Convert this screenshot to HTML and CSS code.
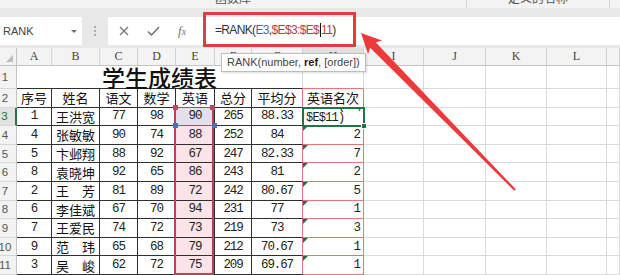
FILE: index.html
```html
<!DOCTYPE html>
<html lang="zh-CN">
<head>
  <meta charset="UTF-8" />
  <title>RANK 函数</title>
  <link rel="stylesheet" href="styles.css">
</head>
<body>
  <div class="ribbon">
    <div class="ribbon-group"><span>函数库</span></div>
    <div class="ribbon-group names"><span>定义的名称</span></div>
  </div>
  <div class="band"></div>

  <div class="formula-bar">
    <div class="name-box"><span>RANK</span><i class="dropdown"></i></div>
    <div class="grip"><i></i></div>
    <div class="fx-buttons">
      <svg width="10" height="10" viewBox="0 0 10 10"><path d="M1 1L9 9M9 1L1 9" stroke="#777" stroke-width="1.4" fill="none"/></svg>
      <svg width="13" height="10" viewBox="0 0 13 10"><path d="M1 5.5L4.5 9L12 1" stroke="#777" stroke-width="1.6" fill="none"/></svg>
      <span class="fx">f<small>x</small></span>
    </div>
    <div class="formula-input">
      <span>=RANK(<span class="ref-blue">E3</span>,<span class="ref-red">$E$3:$E$<i class="caret"></i>11</span>)</span>
    </div>
  </div>

  <div class="sheet">
    <!-- column headers -->
    <div class="cell corner"><i></i></div>
    <div class="cell col-head">A</div>
    <div class="cell col-head">B</div>
    <div class="cell col-head">C</div>
    <div class="cell col-head">D</div>
    <div class="cell col-head">E</div>
    <div class="cell col-head">F</div>
    <div class="cell col-head">G</div>
    <div class="cell col-head sel">H</div>
    <div class="cell col-head">I</div>
    <div class="cell col-head">J</div>
    <div class="cell col-head">K</div>
    <div class="cell col-head">L</div>
    <div class="cell col-head"></div>

    <!-- row 1 -->
    <div class="cell row-head">1</div>
    <div class="cell title">学生成绩表</div>
    <div class="cell rank-top"></div>
    <div class="cell"></div><div class="cell"></div><div class="cell"></div><div class="cell"></div><div class="cell"></div>

    <!-- row 2 -->
    <div class="cell row-head">2</div>
    <div class="cell tbl zh">序号</div>
    <div class="cell tbl zh">姓名</div>
    <div class="cell tbl zh">语文</div>
    <div class="cell tbl zh">数学</div>
    <div class="cell tbl zh">英语</div>
    <div class="cell tbl zh">总分</div>
    <div class="cell tbl zh avg">平均分</div>
    <div class="cell rank zh">英语名次</div>
    <div class="cell"></div><div class="cell"></div><div class="cell"></div><div class="cell"></div><div class="cell"></div>

    <!-- row 3 -->
    <div class="cell row-head sel">3</div>
    <div class="cell tbl num">1</div>
    <div class="cell tbl zh">王洪宽</div>
    <div class="cell tbl num">77</div>
    <div class="cell tbl num">98</div>
    <div class="cell tbl num eng first">90<span class="ref-range"></span><span class="ref-cell"></span></div>
    <div class="cell tbl num">265</div>
    <div class="cell tbl num avg">88.33</div>
    <div class="cell rank active">
      <div class="edit"><span>=RANK(E3,$E$3:</span><span>$E$11)</span></div>
    </div>
    <div class="cell"></div><div class="cell"></div><div class="cell"></div><div class="cell"></div><div class="cell"></div>

    <!-- row 4 -->
    <div class="cell row-head">4</div>
    <div class="cell tbl num">4</div>
    <div class="cell tbl zh">张敏敏</div>
    <div class="cell tbl num">90</div>
    <div class="cell tbl num">74</div>
    <div class="cell tbl num eng">88</div>
    <div class="cell tbl num">252</div>
    <div class="cell tbl num avg">84</div>
    <div class="cell rank num flag">2</div>
    <div class="cell"></div><div class="cell"></div><div class="cell"></div><div class="cell"></div><div class="cell"></div>

    <!-- row 5 -->
    <div class="cell row-head">5</div>
    <div class="cell tbl num">5</div>
    <div class="cell tbl zh">卞邺翔</div>
    <div class="cell tbl num">88</div>
    <div class="cell tbl num">92</div>
    <div class="cell tbl num eng">67</div>
    <div class="cell tbl num">247</div>
    <div class="cell tbl num avg">82.33</div>
    <div class="cell rank num flag">7</div>
    <div class="cell"></div><div class="cell"></div><div class="cell"></div><div class="cell"></div><div class="cell"></div>

    <!-- row 6 -->
    <div class="cell row-head">6</div>
    <div class="cell tbl num">8</div>
    <div class="cell tbl zh">袁晓坤</div>
    <div class="cell tbl num">92</div>
    <div class="cell tbl num">65</div>
    <div class="cell tbl num eng">86</div>
    <div class="cell tbl num">243</div>
    <div class="cell tbl num avg">81</div>
    <div class="cell rank num flag">2</div>
    <div class="cell"></div><div class="cell"></div><div class="cell"></div><div class="cell"></div><div class="cell"></div>

    <!-- row 7 -->
    <div class="cell row-head">7</div>
    <div class="cell tbl num">2</div>
    <div class="cell tbl zh"><span class="spread">王 芳</span></div>
    <div class="cell tbl num">81</div>
    <div class="cell tbl num">89</div>
    <div class="cell tbl num eng">72</div>
    <div class="cell tbl num">242</div>
    <div class="cell tbl num avg">80.67</div>
    <div class="cell rank num flag">5</div>
    <div class="cell"></div><div class="cell"></div><div class="cell"></div><div class="cell"></div><div class="cell"></div>

    <!-- row 8 -->
    <div class="cell row-head">8</div>
    <div class="cell tbl num">6</div>
    <div class="cell tbl zh">李佳斌</div>
    <div class="cell tbl num">67</div>
    <div class="cell tbl num">70</div>
    <div class="cell tbl num eng">94</div>
    <div class="cell tbl num">231</div>
    <div class="cell tbl num avg">77</div>
    <div class="cell rank num flag">1</div>
    <div class="cell"></div><div class="cell"></div><div class="cell"></div><div class="cell"></div><div class="cell"></div>

    <!-- row 9 -->
    <div class="cell row-head">9</div>
    <div class="cell tbl num">7</div>
    <div class="cell tbl zh">王爱民</div>
    <div class="cell tbl num">74</div>
    <div class="cell tbl num">72</div>
    <div class="cell tbl num eng">73</div>
    <div class="cell tbl num">219</div>
    <div class="cell tbl num avg">73</div>
    <div class="cell rank num flag">3</div>
    <div class="cell"></div><div class="cell"></div><div class="cell"></div><div class="cell"></div><div class="cell"></div>

    <!-- row 10 -->
    <div class="cell row-head">10</div>
    <div class="cell tbl num">9</div>
    <div class="cell tbl zh"><span class="spread">范 玮</span></div>
    <div class="cell tbl num">65</div>
    <div class="cell tbl num">68</div>
    <div class="cell tbl num eng">79</div>
    <div class="cell tbl num">212</div>
    <div class="cell tbl num avg">70.67</div>
    <div class="cell rank num flag">1</div>
    <div class="cell"></div><div class="cell"></div><div class="cell"></div><div class="cell"></div><div class="cell"></div>

    <!-- row 11 -->
    <div class="cell row-head">11</div>
    <div class="cell tbl num">3</div>
    <div class="cell tbl zh"><span class="spread">吴 峻</span></div>
    <div class="cell tbl num">62</div>
    <div class="cell tbl num">72</div>
    <div class="cell tbl num eng">75</div>
    <div class="cell tbl num">209</div>
    <div class="cell tbl num avg">69.67</div>
    <div class="cell rank num flag">1</div>
    <div class="cell"></div><div class="cell"></div><div class="cell"></div><div class="cell"></div><div class="cell"></div>
  </div>

  <!-- screenshot annotations -->
  <div class="callout-box"></div>
  <div class="tooltip">RANK(number, <b>ref</b>, [order])</div>
  <svg class="arrow" width="620" height="275" viewBox="0 0 620 275">
    <polygon fill="#ec3a3a" points="361,33 382,40.5 375.8,42.4 515.8,189.3 514.3,190.7 370.2,47.8 368,54"/>
  </svg>
</body>
</html>
```

FILE: styles.css
```css
html, body {
  margin: 0;
  height: 100%;
  background: #fff;
  overflow: hidden;
}
body {
  position: relative;
  font-family: "Liberation Sans", "Noto Sans CJK SC", sans-serif;
  color: #333;
}

/* ribbon strip, cut off at the top */
.ribbon {
  height: 8px;
  display: flex;
  overflow: hidden;
  background: #f3f3f3;
}
.ribbon-group {
  width: 466px;
  border-right: 1px solid #d4d4d4;
  text-align: center;
  font: 12px/12px "Noto Sans CJK SC", sans-serif;
  color: #555;
}
.ribbon-group span {
  display: block;
  margin-top: -8px;
}
.ribbon-group.names {
  width: 142px;
}
.band {
  height: 9px;
  background: #e8e8e8;
}

/* formula bar */
.formula-bar {
  display: flex;
  height: 28px;
  padding-bottom: 3px;
  background: #e8e8e8;
}
.name-box {
  width: 82px;
  box-sizing: border-box;
  padding: 0 5px 0 3px;
  display: flex;
  align-items: center;
  justify-content: space-between;
  background: #fff;
  font-size: 11px;
  color: #444;
}
.dropdown {
  width: 0;
  height: 0;
  border-left: 3px solid transparent;
  border-right: 3px solid transparent;
  border-top: 3px solid #707070;
}
.grip {
  width: 26px;
  display: flex;
  align-items: center;
  justify-content: center;
}
.grip i {
  width: 2px;
  height: 10px;
  background: repeating-linear-gradient(to bottom, #ababab 0 2px, transparent 2px 4px);
}
.fx-buttons {
  width: 95px;
  box-sizing: border-box;
  padding-left: 11px;
  display: flex;
  align-items: center;
  gap: 18px;
  background: #fff;
}
.fx {
  font: italic 13px "Liberation Serif", serif;
  color: #777;
}
.fx small {
  font-size: 10px;
}
.formula-input {
  flex: 1;
  margin-left: 1px;
  padding: 0 0 3px 11px;
  display: flex;
  align-items: center;
  background: #fff;
  font-size: 12px;
  letter-spacing: -0.65px;
  color: #333;
}
.ref-blue { color: #3b6db5; }
.ref-red { color: #c0394a; }
.caret {
  display: inline-block;
  width: 1px;
  height: 14px;
  margin: 0 0.5px;
  background: #111;
  vertical-align: -3px;
}

/* sheet grid */
.sheet {
  display: grid;
  grid-template-columns: 17px 35px 48px 38px 38px 39px 37px 51px 61px 60px 62px 61px 60px 13px;
  grid-template-rows: 18px 23px repeat(10, 18.6px);
}
.cell {
  min-width: 0;
  display: flex;
  align-items: center;
  justify-content: center;
  border-right: 1px solid #dadada;
  border-bottom: 1px solid #dadada;
  font-size: 13px;
  color: #111;
}
.col-head {
  background: #f3f3f3;
  border-right-color: #d2d2d2;
  border-bottom-color: #c4c4c4;
  font: 12px "Liberation Serif", serif;
  color: #444;
}
.col-head.sel {
  background: #e0e0e0;
}
.corner {
  background: #f3f3f3;
  border-right-color: #c4c4c4;
  border-bottom-color: #c4c4c4;
  align-items: flex-end;
  justify-content: flex-end;
  padding: 0 3px 3px 0;
}
.corner i {
  border-left: 7px solid transparent;
  border-bottom: 7px solid #bdbdbd;
}
.row-head {
  background: #f3f3f3;
  border-right-color: #c4c4c4;
  border-bottom-color: #d6d6d6;
  padding-right: 6px;
  font: 11.5px "Liberation Sans", sans-serif;
  color: #555;
  overflow: hidden;
}
.row-head.sel {
  background: #e2e2e2;
  border-right: 2px solid #217346;
  color: #217346;
}

.title {
  grid-column: span 7;
  border-bottom-color: #2f2f2f;
  font: 500 23px/23px "Noto Sans CJK SC", sans-serif;
  color: #111;
}
.rank-top {
  border-bottom-color: #e77676;
}

.tbl {
  border-right-color: #2f2f2f;
  border-bottom-color: #2f2f2f;
}
.tbl.avg {
  border-right-color: #e77676;
}
.rank {
  position: relative;
  border-right-color: #e77676;
  border-bottom-color: #e77676;
}
.zh {
  font-family: "Noto Sans CJK SC", sans-serif;
  font-size: 13px;
}
.num {
  font-family: "Liberation Mono", monospace;
  font-size: 12.5px;
  letter-spacing: -1.1px;
  color: #222;
}
.rank.num {
  justify-content: flex-end;
  padding-right: 3px;
}
.spread {
  display: block;
  width: 100%;
  padding: 0 4px;
  box-sizing: border-box;
  text-align: justify;
  text-align-last: justify;
}

/* range E3:E11 referenced by the formula */
.eng {
  background: #fae4e7;
}
.eng.first {
  position: relative;
  background: #e3e0ee;
}
.ref-range {
  position: absolute;
  left: -2px;
  top: -1px;
  width: 40px;
  height: 168px;
  box-sizing: border-box;
  border: 2px solid #b8425a;
  border-top-width: 1px;
  z-index: 2;
  pointer-events: none;
}
.ref-range::before,
.ref-range::after {
  content: "";
  position: absolute;
  top: -3px;
  width: 5px;
  height: 5px;
  background: #c0475f;
}
.ref-range::before { left: -3px; }
.ref-range::after { right: -3px; }
.ref-cell {
  position: absolute;
  left: -1px;
  right: -1px;
  bottom: -1px;
  height: 1px;
  background: #4a70c2;
  z-index: 2;
}
.ref-cell::before,
.ref-cell::after {
  content: "";
  position: absolute;
  top: -2px;
  width: 5px;
  height: 5px;
  background: #4a70c2;
}
.ref-cell::before { left: -2px; }
.ref-cell::after { right: -2px; }

/* number-stored-as-text flags */
.flag::before {
  content: "";
  position: absolute;
  left: 0;
  top: 0;
  border-top: 5px solid #1e7145;
  border-right: 5px solid transparent;
}

/* active cell being edited */
.active {
  display: block;
  z-index: 3;
  outline: 2px solid #217346;
  outline-offset: -1px;
  background: #fff;
}
.active::after {
  content: "";
  position: absolute;
  right: -4px;
  bottom: -4px;
  width: 4px;
  height: 4px;
  background: #217346;
  border: 1px solid #fff;
}
.edit {
  height: 100%;
  overflow: hidden;
  padding: 0 0 1px 3px;
  box-sizing: border-box;
  display: flex;
  flex-direction: column;
  justify-content: flex-end;
  font-family: "Liberation Mono", monospace;
  font-size: 12px;
  line-height: 12px;
  letter-spacing: -0.8px;
  white-space: nowrap;
  color: #222;
}

/* annotations drawn over the screenshot */
.callout-box {
  position: absolute;
  left: 203px;
  top: 12px;
  width: 153px;
  height: 35px;
  box-sizing: border-box;
  border: 3px solid #e53b3b;
  z-index: 5;
}
.tooltip {
  position: absolute;
  left: 221px;
  top: 53px;
  height: 19px;
  padding: 0 5px;
  box-sizing: border-box;
  background: #fff;
  border: 1px solid #bdbdbd;
  box-shadow: 1px 1px 2px rgba(0, 0, 0, 0.15);
  font-size: 11px;
  line-height: 17px;
  color: #444;
  white-space: nowrap;
  z-index: 6;
}
.tooltip b {
  color: #222;
}
.arrow {
  position: absolute;
  left: 0;
  top: 0;
  pointer-events: none;
  z-index: 7;
}
```
